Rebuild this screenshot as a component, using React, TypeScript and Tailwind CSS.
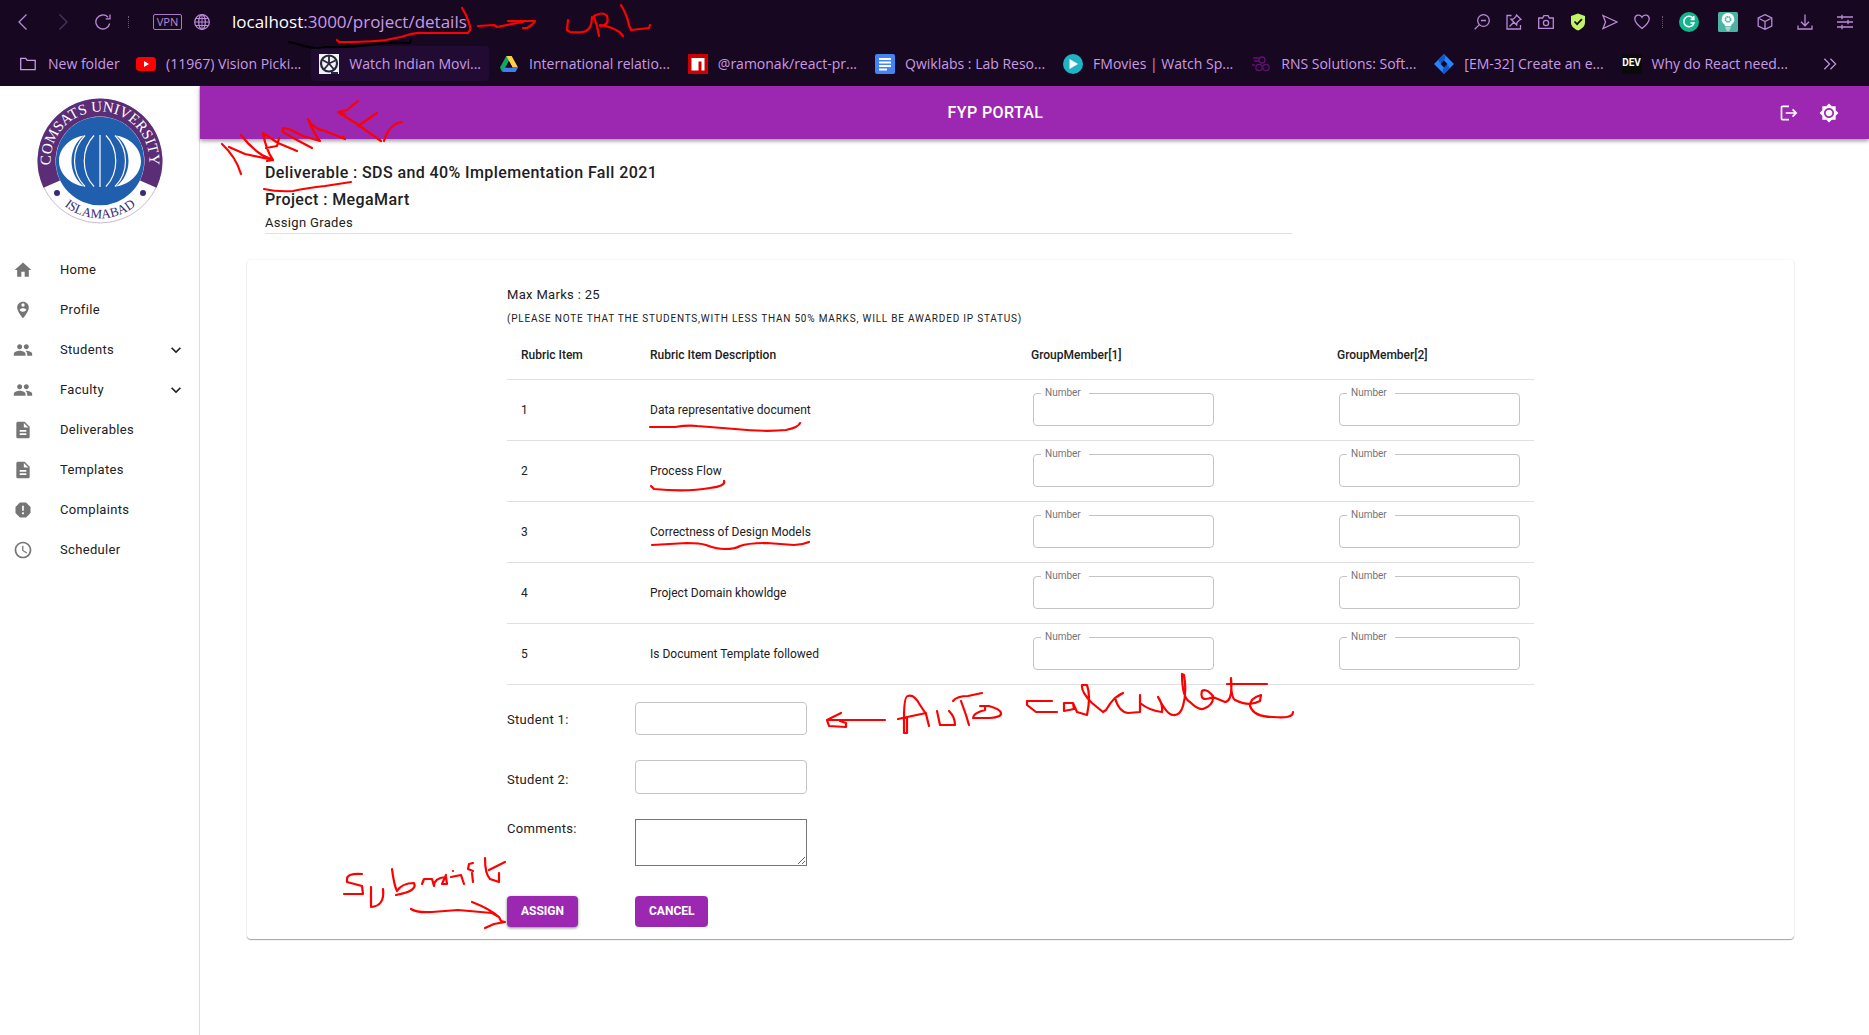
import React from "react";
import {
  MdBrightnessHigh,
  MdDescription,
  MdExpandMore,
  MdHome,
  MdLogout,
  MdPeople,
  MdPersonPinCircle,
  MdReport,
  MdSchedule,
} from "react-icons/md";

const line = { fill: "none", stroke: "currentColor", strokeWidth: 1.3 } as const;

function Svg({ children, className = "size-4" }: { children: React.ReactNode; className?: string }) {
  return (
    <svg viewBox="0 0 16 16" className={`shrink-0 ${className}`} {...line} aria-hidden="true">
      {children}
    </svg>
  );
}

function ToolButton({ label, children }: { label: string; children: React.ReactNode }) {
  return (
    <button type="button" aria-label={label} className="flex shrink-0 items-center justify-center">
      {children}
    </button>
  );
}

function AddressBar() {
  return (
    <div className="flex h-11 items-center pl-[15px] pr-4 text-[#b98ad6]">
      <div className="flex items-center gap-6">
        <ToolButton label="Back"><Svg><path d="M11.5 .5 4 8l7.5 7.5" /></Svg></ToolButton>
        <span className="flex text-[#4c3560]"><ToolButton label="Forward"><Svg><path d="M4.500 .5 12 8l-7.500 7.500" /></Svg></ToolButton></span>
        <ToolButton label="Reload"><Svg><path d="M14.700 9.500A7 7 0 1 1 13 3.200M15 .5v4.300h-4.300" /></Svg></ToolButton>
      </div>
      <div className="ml-[17px] h-3 border-l border-dotted border-[#6d5580]" />
      <div className="ml-6 flex h-4 w-[29px] items-center justify-center rounded-xs border border-[#a77bc4] text-[11px]">VPN</div>
      <Svg className="ml-3 size-4">
        <circle cx="8" cy="8" r="7.300" />
        <ellipse cx="8" cy="8" rx="3.300" ry="7.300" />
        <path d="M8 .7v14.600M.7 8h14.600M1.600 4.500h12.800M1.600 11.500h12.800" strokeWidth="1" />
      </Svg>
      <div className="ml-[22px] text-[17px] whitespace-nowrap text-[#c79be4]">
        <span className="text-white">localhost</span>:3000/project/details
      </div>
      <div className="ml-auto flex items-center">
        <div className="flex items-center gap-4">
          <ToolButton label="Zoom"><Svg><circle cx="9.500" cy="6.500" r="5.800" /><path d="M5.400 10.600.7 15.300M7 6.500h5" /></Svg></ToolButton>
          <ToolButton label="Pin page"><Svg><path d="M5.500 1.500H1v13.500h13.500V11M10.500 1l4.500 4.500-1.500.5-2.500 2.500-.3 2.500L5 5.300l2.500-.3L10 2.500zM7.800 8.200 3.500 12.500" /></Svg></ToolButton>
          <ToolButton label="Snapshot"><Svg><path d="M.7 4h4l1.200-2.300h4.200L11.300 4h4v10.300H.7z" /><circle cx="8" cy="9" r="2.600" /></Svg></ToolButton>
          <ToolButton label="Protection">
            <svg viewBox="0 0 16 18" className="h-[18px] w-4" aria-hidden="true">
              <path d="M8 .5 15 3v6.500c0 4-3.500 6.500-7 8-3.500-1.500-7-4-7-8V3z" fill="#c0f466" />
              <path d="m4.500 8.500 2.600 2.700 4.800-5" fill="none" stroke="#1a0a24" strokeWidth="1.800" />
            </svg>
          </ToolButton>
          <ToolButton label="Send"><Svg><path d="M1 1.500 15 8 1 14.500 3.500 8z" /></Svg></ToolButton>
          <ToolButton label="Favourite"><Svg><path d="M8 14.500C3 10.500.8 8 .8 5a3.800 3.800 0 0 1 7.200-1.800A3.800 3.800 0 0 1 15.200 5c0 3-2.200 5.500-7.200 9.500z" /></Svg></ToolButton>
        </div>
        <div className="ml-3 h-3 border-l border-dotted border-[#6d5580]" />
        <div className="ml-4 flex items-center gap-[19px]">
          <ToolButton label="Grammar">
            <svg viewBox="0 0 20 20" className="size-5" aria-hidden="true">
              <circle cx="10" cy="10" r="10" fill="#10b68d" />
              <path d="M14.300 6.500A5.200 5.200 0 1 0 15 11h-3.600M14.800 4v3.400h-3.200" fill="none" stroke="#fff" strokeWidth="1.600" />
            </svg>
          </ToolButton>
          <ToolButton label="Ideas">
            <svg viewBox="0 0 20 20" className="size-5" aria-hidden="true">
              <rect width="20" height="20" rx="1.500" fill="#49b4a3" />
              <path d="M10 1a6.300 6.300 0 0 0-3.500 11.500l.7 1.800h5.600l.7-1.800A6.300 6.300 0 0 0 10 1zM7.500 15.500h5v1h-5zM8.500 17.500h3v1h-3z" fill="#fff" />
              <circle cx="10" cy="7.300" r="2.600" fill="none" stroke="#49b4a3" strokeWidth="1.800" strokeDasharray="1.600 .5" />
            </svg>
          </ToolButton>
          <ToolButton label="Extensions"><Svg><path d="M8 .7 14.800 4v8L8 15.300 1.200 12V4zM1.200 4 8 7.500 14.800 4M8 7.500v7.800" /></Svg></ToolButton>
        </div>
        <div className="ml-6 flex items-center gap-6">
          <ToolButton label="Downloads"><Svg><path d="M8 .5v11M4 7.800l4 4 4-4M1 11.500V15h14v-3.500" /></Svg></ToolButton>
          <ToolButton label="Easy setup"><Svg><path d="M0 3h16M0 8h16M0 13h16M5 .8v4.400M11 5.800v4.400M5 10.800v4.400" /></Svg></ToolButton>
        </div>
      </div>
    </div>
  );
}

const icon20 = "h-5 w-5 shrink-0";

const bookmarks: { text: string; icon: React.ReactNode; active?: boolean }[] = [
  {
    text: "(11967) Vision Picki...",
    icon: (
      <svg viewBox="0 0 20 20" className={icon20}><rect y="3" width="20" height="14" rx="3.500" fill="#f00" /><path d="M8 7v6l5-3z" fill="#fff" /></svg>
    ),
  },
  {
    text: "Watch Indian Movi...",
    active: true,
    icon: (
      <svg viewBox="0 0 20 20" className={icon20}>
        <rect width="20" height="20" fill="#f2f2f5" />
        <circle cx="10" cy="9.500" r="8" fill="none" stroke="#26263f" strokeWidth="2.200" />
        <path d="M10 9.500V2M10 9.500l6.500-3M10 9.500l5 6M10 9.500l-5 6M10 9.500 3.500 6M12 19h7" stroke="#26263f" strokeWidth="1.800" />
      </svg>
    ),
  },
  {
    text: "International relatio...",
    icon: (
      <svg viewBox="0 0 20 20" className={icon20}>
        <path d="M7.300 2h5.400L6 14l-3 4-2-4.500z" fill="#0da960" />
        <path d="M7.300 2h5.400L19 13.500h-5.500z" fill="#ffcf48" />
        <path d="M4.500 13.500H19L16.500 18h-13z" fill="#3d7ff0" />
        <path d="M10 7.200 6.600 13.500h6.800z" fill="#170720" />
      </svg>
    ),
  },
  {
    text: "@ramonak/react-pr...",
    icon: (
      <svg viewBox="0 0 20 20" className={icon20}><path d="M0 0h20v20H0z" fill="#cb0000" /><path d="M3.500 4h13v12.500h-3v-9h-3v9h-7z" fill="#fff" /></svg>
    ),
  },
  {
    text: "Qwiklabs : Lab Reso...",
    icon: (
      <svg viewBox="0 0 20 20" className={icon20}><rect width="20" height="20" rx="2" fill="#4285f4" /><path d="M4 5h12M4 8.500h12M4 12h12M4 15.500h8" stroke="#fff" strokeWidth="1.800" /></svg>
    ),
  },
  {
    text: "FMovies | Watch Sp...",
    icon: (
      <svg viewBox="0 0 20 20" className={icon20}><circle cx="10" cy="10" r="10" fill="#1fb3c6" /><path d="M6.500 5v10l8.500-5z" fill="#fff" /></svg>
    ),
  },
  {
    text: "RNS Solutions: Soft...",
    icon: (
      <svg viewBox="0 0 20 20" className={icon20} fill="none" stroke="#5f1270" strokeWidth="1.300">
        <circle cx="11" cy="6" r="3" /><circle cx="8" cy="13.500" r="3.200" /><circle cx="15" cy="13.500" r="3.200" /><path d="M2 4h6M3 7h5M1 11h3" />
      </svg>
    ),
  },
  {
    text: "[EM-32] Create an e...",
    icon: (
      <svg viewBox="0 0 20 20" className={icon20}><path d="M10 0 20 10 10 20 0 10z" fill="#2684ff" /><path d="M10 0 5 5c-1 3 1 4 3 4l2-2.500C12 4 11.500 2 10 0zM10 20l5-5c1-3-1-4-3-4l-2 2.500C8 16 8.500 18 10 20z" fill="#0f57cc" /><path d="m10 6.500 3.500 3.500-3.500 3.500L6.500 10z" fill="#170720" /></svg>
    ),
  },
  {
    text: "Why do React need...",
    icon: (
      <span className="flex h-5 w-5 shrink-0 items-center justify-center bg-[#0a0a0a] font-['Roboto',sans-serif] text-[10px] font-bold text-white">DEV</span>
    ),
  },
];

function BookmarksBar() {
  return (
    <nav aria-label="Bookmarks" className="flex h-[42px] items-center pb-[3px] text-sm text-[#c79be4]">
      <a href="#new-folder" className="flex w-[128px] shrink-0 items-center gap-3 pl-5">
        <Svg><path d="M.7 2.300h5l1.500 2h8v9.400H.7z" /></Svg>
        New folder
      </a>
      <div className="flex gap-0.5">
        {bookmarks.map((b) => (
          <a
            key={b.text}
            href="#bookmark"
            className={`flex h-[35px] shrink-0 items-center gap-2.5 rounded-sm px-2 whitespace-nowrap ${b.active ? "bg-[#220b33]" : ""}`}
          >
            {b.icon}
            {b.text}
          </a>
        ))}
      </div>
      <button type="button" aria-label="More bookmarks" className="mr-8 ml-auto">
        <Svg className="h-3.5 w-3.5"><path d="m1.500 2 6 6-6 6M8.500 2l6 6-6 6" /></Svg>
      </button>
    </nav>
  );
}

function Logo() {
  return (
    <svg viewBox="-63 -63 126 126" className="size-[126px]" role="img" aria-label="COMSATS University Islamabad">
      <circle r="62" fill="#fff" stroke="#c9b8d6" strokeWidth="1" />
      <path d="M-56.500 26.700A62.500 62.500 0 1 1 56.500 26.700L40 19.500A44.500 44.500 0 1 0-40 19.500z" fill="#5a2d76" />
      <circle r="44.300" fill="#1f5fae" />
      <path d="M-16-25.500C-31-23-41-12-41 0S-31 23-16 25.500C-24 20-28.500 10-28.500 0S-24-20-16-25.500zM16-25.500C31-23 41-12 41 0S31 23 16 25.500C24 20 28.500 10 28.500 0S24-20 16-25.500z" fill="#fff" />
      <g fill="none" stroke="#fff" strokeWidth="1.200">
        <path d="M-15-25.500C-29-12-29 12-15 25.500M15-25.500C29-12 29 12 15 25.500" />
        <path d="M-6-25.500C-19-12-19 12-6 25.500M6-25.500C19-12 19 12 6 25.500" />
        <path d="M0-26V26" />
      </g>
      <circle cx="-43" cy="32" r="3" fill="#3b2a75" />
      <circle cx="43" cy="32" r="3" fill="#3b2a75" />
      <path id="logo-top" d="M-45.800 18.500A49.400 49.400 0 1 1 45.800 18.500" fill="none" />
      <path id="logo-bottom" d="M-42 39A57.300 57.300 0 0 0 42 39" fill="none" />
      <text className="fill-white font-['Liberation_Serif',serif] text-[15px]" textAnchor="middle">
        <textPath href="#logo-top" startOffset="50%">COMSATS UNIVERSITY</textPath>
      </text>
      <text className="fill-[#3b2a75] font-['Liberation_Serif',serif] text-[13px]" textAnchor="middle">
        <textPath href="#logo-bottom" startOffset="50%">ISLAMABAD</textPath>
      </text>
    </svg>
  );
}

const menu = [
  { label: "Home", Icon: MdHome },
  { label: "Profile", Icon: MdPersonPinCircle },
  { label: "Students", Icon: MdPeople, expandable: true },
  { label: "Faculty", Icon: MdPeople, expandable: true },
  { label: "Deliverables", Icon: MdDescription },
  { label: "Templates", Icon: MdDescription },
  { label: "Complaints", Icon: MdReport },
  { label: "Scheduler", Icon: MdSchedule },
];

function Sidebar() {
  return (
    <aside className="w-[200px] shrink-0 border-r border-[#dcdcdc] bg-white">
      <div className="flex justify-center pt-3"><Logo /></div>
      <nav aria-label="Main menu" className="mt-[26px]">
        <ul>
          {menu.map(({ label, Icon, expandable }) => (
            <li key={label}>
              <a href={`#${label.toLowerCase()}`} className="flex h-10 items-center pr-[13px] pl-[13px] text-[13px] tracking-wide">
                <Icon className="size-5 text-[#757575]" />
                <span className="ml-[27px]">{label}</span>
                {expandable && <MdExpandMore className="ml-auto size-5" />}
              </a>
            </li>
          ))}
        </ul>
      </nav>
    </aside>
  );
}

function NumberField({ id }: { id: string }) {
  return (
    <div className="relative w-[181px]">
      <input id={id} type="number" className="block h-[33px] w-full rounded-sm border border-[#c4c4c4] px-3 text-xs outline-none" />
      <label htmlFor={id} className="absolute -top-2 left-2 bg-white pr-2 pl-1 text-[10px] leading-4 text-[#757575]">Number</label>
    </div>
  );
}

const rubrics = [
  "Data representative document",
  "Process Flow",
  "Correctness of Design Models",
  "Project Domain khowldge",
  "Is Document Template followed",
];

function RubricTable() {
  return (
    <table className="mt-0.5 w-full table-fixed text-left text-xs">
      <colgroup>
        <col className="w-[129px]" />
        <col className="w-[381px]" />
        <col className="w-[306px]" />
        <col />
      </colgroup>
      <thead>
        <tr className="h-[50px] border-b border-[#e0e0e0]">
          {["Rubric Item", "Rubric Item Description", "GroupMember[1]", "GroupMember[2]"].map((h) => (
            <th key={h} scope="col" className="px-3.5 pt-0.5 font-medium">{h}</th>
          ))}
        </tr>
      </thead>
      <tbody>
        {rubrics.map((text, i) => (
          <tr key={text} className="h-[61px] border-b border-[#e0e0e0]">
            <td className="px-3.5">{i + 1}</td>
            <td className="px-3.5">{text}</td>
            <td className="pl-4"><NumberField id={`m1-${i}`} /></td>
            <td className="pl-4"><NumberField id={`m2-${i}`} /></td>
          </tr>
        ))}
      </tbody>
    </table>
  );
}

const fieldBox = "block w-[172px] shrink-0 bg-white px-3 text-xs outline-none";

function GradeForm() {
  return (
    <section className="mt-[26px] rounded-sm bg-white pt-[25px] pb-3 shadow-[0_1px_1px_rgba(0,0,0,0.35),0_0_2px_rgba(0,0,0,0.1)]">
      <form className="mx-auto w-full max-w-[1027px]" onSubmit={(e) => e.preventDefault()}>
        <p className="text-[13px] leading-5 tracking-wide">Max Marks : 25</p>
        <p className="mt-1.5 text-[10px] leading-4 tracking-[0.08em] uppercase">
          (Please note that the students,with less than 50% marks, will be awarded IP status)
        </p>
        <RubricTable />
        <div className="mt-[17px] flex flex-col gap-[25px] text-[13px] leading-5 tracking-wide">
          <div className="flex items-start">
            <label htmlFor="student1" className="w-32 pt-2">Student 1:</label>
            <input id="student1" type="text" className={`${fieldBox} h-[33px] rounded-sm border border-[#c4c4c4]`} />
          </div>
          <div className="flex items-start">
            <label htmlFor="student2" className="w-32 pt-2.5">Student 2:</label>
            <input id="student2" type="text" className={`${fieldBox} h-[34px] rounded-sm border border-[#c4c4c4]`} />
          </div>
          <div className="flex items-start">
            <label htmlFor="comments" className="w-32">Comments:</label>
            <textarea id="comments" className={`${fieldBox} h-[47px] border border-[#767676]`} />
          </div>
        </div>
        <div className="mt-[30px] flex text-xs font-bold text-white">
          <div className="w-32">
            <button type="submit" className="h-[31px] rounded-sm bg-[#9c27b0] px-3.5 shadow-[0_1px_3px_rgba(0,0,0,0.5)]">ASSIGN</button>
          </div>
          <button type="button" className="h-[31px] rounded-sm bg-[#9c27b0] px-3.5">CANCEL</button>
        </div>
      </form>
    </section>
  );
}

function Annotations() {
  return (
    <svg
      viewBox="0 0 1869 1035"
      className="pointer-events-none absolute top-0 left-0 h-[1035px] w-[1869px]"
      fill="none"
      stroke="#f00"
      strokeWidth="2.200"
      strokeLinecap="round"
      strokeLinejoin="round"
      aria-hidden="true"
    >
      <path stroke="#000" d="M289 42Q298 44 304 46Q315 49 325 47Q348 48 377 44Q395 42 410 43L411 40" />
      <path d="M337 40 339 42Q370 42 386 40 395 38 401 37 415 32 425 33L468 33Q471 30 470 26L466 15 462 8" />
      <path d="M478 26 494 25 497 27 512 24 523 22 508 21 535 21 533 24 527 28 523 28" />
      <path d="M568 20 567 30 570 32Q582 33 586 31 592 28 592 17M594 17 597 26 599 36M594 16Q603 11 607 16 610 25 600 26M600 25Q618 28 623 36M621 5Q627 15 629 25L631 30 649 28 650 25" />
      <path d="M222 144Q236 157 241 174M229 147 245 154 273 160M241 135Q250 147 262 155L273 160 267 161M273 160Q266 150 263 133L278 143 297 151M266 148 277 146 279 138" />
      <path d="M312 148 297 140 283 132V128L289 129 303 136 320 141Q313 132 308 119 313 129 325 131L345 139M343 137 345 139M358 101 347 110 338 112 357 124 381 141M338 112 345 114M377 113 358 126M384 141Q389 124 402 122" />
      <path d="M264 189Q277 192 293 191 307 188 325 186L351 182" />
      <path d="M650 427H675Q688 425 697 426L735 429Q765 432 786 430 799 427 800 423" />
      <path d="M651 486 654 489Q687 492 710 488 726 486 724 481" />
      <path d="M652 545 687 543Q700 543 706 545 716 549 725 549 735 549 740 546 748 543 767 543L794 545Q802 545 809 542" />
      <path d="M885 720H827L841 713M827 720 829 726 846 727V723L840 721" />
      <path d="M898 719 926 713M904 733H907V718H904ZM904 718Q904 696 908 696 914 694 920 705L926 714 929 726M937 711 940 725H955Q955 717 949 711M953 701Q957 696 968 696L982 693M961 701 966 715 969 725M980 706H989Q1000 709 1001 713 1002 717 990 718H973Q973 713 985 710V706" />
      <path d="M1052 701H1027V705L1036 712H1057M1073 703H1064V711L1074 709 1073 703 1077 712 1087 715Q1091 696 1087 685H1082Q1081 692 1092 703L1103 712 1106 710Q1114 696 1123 693L1115 698Q1119 712 1128 713L1140 712V695 703Q1150 711 1162 712 1163 704 1158 697 1167 715 1173 715 1180 716 1183 706 1187 692 1184 675L1182 674Q1182 698 1190 702 1198 710 1203 709 1214 705 1213 696 1206 688 1202 691 1199 703 1213 697L1225 702Q1233 701 1231 678 1231 698 1235 700 1249 707 1260 701L1261 695Q1250 698 1250 706 1254 717 1273 717 1293 719 1293 712M1227 684H1267" />
      <path d="M362 874Q347 873 347 879L347 882 362 886 363 894H344M371 887V907Q385 906 383 889M392 869Q394 885 397 891 402 883 414 883 418 891 396 895M422 884 424 879H432L434 886Q434 878 446 877L447 884H442L446 875M451 877 461 875 464 884M453 871V871M473 882 472 873M473 871 468 869 469 864 473 863M485 858Q485 874 490 879L499 882V873M489 870 505 862" />
      <path d="M411 909Q417 913 432 912L458 910Q480 912 492 913L499 917M472 902Q490 909 499 917L501 921 505 922 494 924 485 928" />
    </svg>
  );
}

export default function App() {
  return (
    <div className="relative flex min-h-screen flex-col overflow-x-hidden bg-white font-['Roboto',sans-serif] text-[#212121]">
      <div className="bg-[#170720] font-['Open_Sans','Noto_Sans',sans-serif]">
        <AddressBar />
        <BookmarksBar />
      </div>
      <div className="flex flex-1">
        <Sidebar />
        <div className="min-w-0 flex-1">
          <header className="flex h-[53px] items-center bg-[#9c27b0] pr-[30px] pl-3 text-white shadow-[0_2px_4px_rgba(0,0,0,0.4)]">
            <h1 className="flex-1 text-center text-base font-medium tracking-wide">FYP PORTAL</h1>
            <div className="flex gap-5">
              <button type="button" aria-label="Log out"><MdLogout className="size-5" /></button>
              <button type="button" aria-label="Theme"><MdBrightnessHigh className="size-5" /></button>
            </div>
          </header>
          <main className="pt-5 pr-[75px] pl-[47px]">
            <div className="ml-[18px] max-w-[1027px] border-b border-[#e0e0e0]">
              <h2 className="text-base leading-[27px] font-medium tracking-wide">
                Deliverable : SDS and 40% Implementation Fall 2021
                <br />
                Project : MegaMart
              </h2>
              <p className="text-[13px] leading-5 tracking-wide">Assign Grades</p>
            </div>
            <GradeForm />
          </main>
        </div>
      </div>
      <Annotations />
    </div>
  );
}
